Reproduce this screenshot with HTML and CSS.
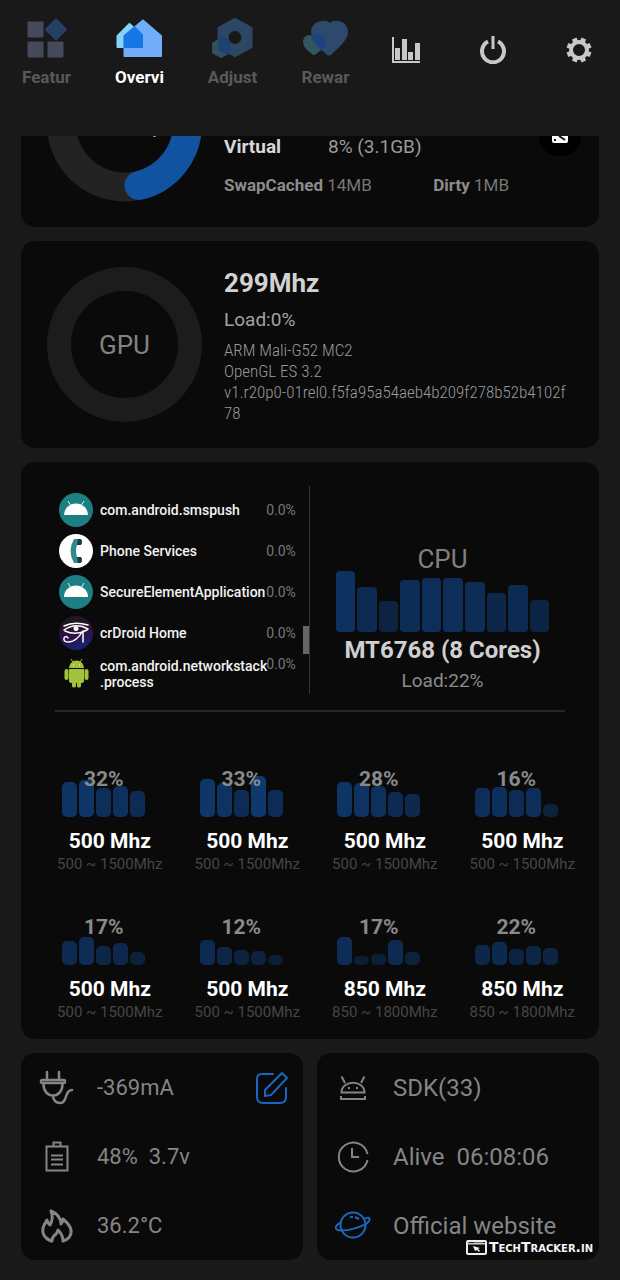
FILE: index.html
```html
<!DOCTYPE html>
<html lang="en">
<head>
<meta charset="utf-8">
<meta name="viewport" content="width=device-width, initial-scale=1">
<title>Overview</title>
<link rel="stylesheet" href="styles.css">
</head>
<body>
<header class="topbar">
  <nav class="tabs">
    <button class="tab" type="button">
      <svg class="tab-icon" viewBox="0 0 48 40"><g fill="#454a5a"><rect x="4.500" y="3.500" width="16" height="16" rx="1"/><rect x="4.500" y="23.500" width="16" height="16" rx="1"/><rect x="24.500" y="23.500" width="16" height="16" rx="1"/></g><path fill="#263f66" stroke="#263f66" stroke-width="2" stroke-linejoin="round" d="M33 1.500l10 10-10 10-10-10z"/></svg>
      <span>Featur</span>
    </button>
    <button class="tab tab-active" type="button">
      <svg class="tab-icon" viewBox="0 0 48 40"><g stroke-width="2" stroke-linejoin="round"><path fill="#86d3f9" stroke="#86d3f9" d="M1.500 18L13.500 6L26 18V29H1.500z"/><path fill="#71adfa" stroke="#71adfa" d="M8.500 18L27 2.500L45 18V38H8.500z"/><path fill="#1676e4" stroke="#1676e4" d="M8.500 18L18.500 9.500L26 17V29H8.500z"/></g></svg>
      <span>Overvi</span>
    </button>
    <button class="tab" type="button">
      <svg class="tab-icon" viewBox="0 0 48 40"><path fill="#2c4764" stroke="#2c4764" stroke-width="2" stroke-linejoin="round" d="M26 1L42.500 10V29L26 38L9.500 29V10z"/><path fill="#31505d" stroke="#31505d" stroke-linejoin="round" d="M12 20.500L20.500 25V35L12 39.500L3.500 35V25z"/><path fill="#1d4272" d="M9.500 21l4-2.500L21 24V35L18 37L9.500 32z"/><circle cx="26" cy="19.500" r="6.500" fill="#191919"/></svg>
      <span>Adjust</span>
    </button>
    <button class="tab" type="button">
      <svg class="tab-icon" viewBox="0 0 48 40"><path fill="#2d4a6c" d="M28 5C33 0 46 3 46 14C46 22 36 30 30 36C28 38 26 38 24 36C18 30 9 22 9 14C9 3 23 0 28 5z"/><path fill="#315660" d="M12 20C16 14 24 18 24 24C24 29 18 33 14 36Q12 38 10 36C6 33 1 29 1 24C1 18 8 14 12 20z"/><path fill="#1d447c" d="M10 18C15 14 24 17 24 24C24 28 21 31 19 32C15 28 10 23 10 18z"/></svg>
      <span>Rewar</span>
    </button>
  </nav>
  <div class="actions">
    <button class="action" type="button" aria-label="Charts">
      <svg viewBox="0 0 28 28" fill="#c8c8c8"><path d="M0 1h2v24h26v2H0zM3 12h5v12H3zM10 3h5v21h-5zM16 16h5v8h-5zM23 7h5v17h-5z"/></svg>
    </button>
    <button class="action" type="button" aria-label="Power">
      <svg viewBox="0 0 28 28" fill="none" stroke="#c8c8c8" stroke-width="4"><path d="M9 5.500A11 11 0 1 0 19 5.500"/><path stroke-width="3" d="M14 0v13"/></svg>
    </button>
    <button class="action" type="button" aria-label="Settings">
      <svg viewBox="0 0 28 28" fill="none" stroke="#c8c8c8"><circle cx="14" cy="14" r="8" stroke-width="4"/><g stroke-width="5"><path d="M14 1.500v4M14 22.500v4M1.500 14h4M22.500 14h4" transform="rotate(22.500 14 14)"/><path d="M14 1.500v4M14 22.500v4M1.500 14h4M22.500 14h4" transform="rotate(-22.500 14 14)"/></g></svg>
    </button>
  </div>
</header>

<main class="content">
  <section class="card memory">
    <svg class="memory-ring" viewBox="0 90 155 66" fill="none" stroke-width="29"><circle cx="77.500" cy="78" r="63" stroke="#232323"/><path d="M140.500 78A63 63 0 0 1 92 139.500" stroke="#1153a0" stroke-linecap="round"/><path d="M106 90.500h3" stroke="#8a8a8a" stroke-width="1"/></svg>
    <div class="memory-info">
      <div class="virtual"><b>Virtual</b><span>8% (3.1GB)</span></div>
      <div class="swap"><span><b>SwapCached</b> 14MB</span><span><b>Dirty</b> 1MB</span></div>
    </div>
    <button class="clean" type="button" aria-label="Clean memory">
      <svg viewBox="0 0 16 8"><path fill="#fff" d="M0 0h16v5q0 2-2 2H2Q0 7 0 5z"/><path fill="none" stroke="#111" stroke-width="2" d="M7 0l3 2 3 2M2 4h2"/></svg>
    </button>
  </section>

  <section class="card gpu">
    <div class="gpu-ring">GPU</div>
    <div class="gpu-info">
      <h2 class="gpu-clock">299Mhz</h2>
      <p class="gpu-load">Load:0%</p>
      <p class="gpu-details">ARM Mali-G52 MC2<br>OpenGL ES 3.2<br>v1.r20p0-01rel0.f5fa95a54aeb4b209f278b52b4102f78</p>
    </div>
  </section>

  <section class="card cpu">
    <div class="cpu-top">
      <ul class="processes">
        <li><svg class="app" viewBox="0 0 34 34"><circle cx="17" cy="17" r="17" fill="#1d7f83"/><path fill="#fff" d="M5 22a12 11.500 0 0 1 24 0z"/><path stroke="#d5eeee" d="M12 13L9 8M22 13l3-5"/></svg><span class="name">com.android.smspush</span><span class="usage">0.0%</span></li>
        <li><svg class="app" viewBox="0 0 34 34"><circle cx="17" cy="17" r="17" fill="#fff"/><path fill="#32888d" d="M15 5h7v6h-4q-2 6 0 12h4v6h-7q-7-12 0-24z"/><path fill="#123d47" d="M19 5h2q2 0 2 3t-2 3h-3zM18 23h3q2 0 2 3t-2 3h-2z"/></svg><span class="name">Phone Services</span><span class="usage">0.0%</span></li>
        <li><svg class="app" viewBox="0 0 34 34"><circle cx="17" cy="17" r="17" fill="#1d7f83"/><path fill="#fff" d="M5 22a12 11.500 0 0 1 24 0z"/><path stroke="#d5eeee" d="M12 13L9 8M22 13l3-5"/></svg><span class="name">SecureElementApplication</span><span class="usage">0.0%</span></li>
        <li><svg class="app" viewBox="0 0 34 34"><defs><linearGradient id="eye" x1="0" y1="0" x2="0.300" y2="1"><stop offset="0.200" stop-color="#1c1a1e"/><stop offset="0.600" stop-color="#321140"/><stop offset="1" stop-color="#1c2070"/></linearGradient></defs><circle cx="17" cy="17" r="17" fill="url(#eye)"/><g fill="none" stroke="#fff" stroke-width="1.500" stroke-linecap="round"><path d="M5 10q10-5 24-1M5 14q12-8 24-1M6 15q11 5 22-1M24 15v11M23 16q-5 9-13 10q-6 0-5-4q2-3 4 0"/></g><circle cx="17" cy="12.500" r="2.500" fill="#fff"/></svg><span class="name">crDroid Home</span><span class="usage">0.0%</span></li>
        <li><svg class="app" viewBox="0 0 34 34"><g fill="#a2c23b"><path d="M10 11a7.500 7.500 0 0 1 15 0z"/><path d="M10 12h15v12q0 2-2 2h-1v3q0 1.500-2 1.500t-2-1.500v-3h-1v3q0 1.500-2 1.500t-2-1.500v-3h-1q-2 0-2-2z"/><rect x="5.500" y="12" width="4" height="11" rx="2"/><rect x="25.500" y="12" width="4" height="11" rx="2"/></g><path stroke="#a2c23b" d="M14 5l-2-3M21 5l2-3"/><path stroke="#fff" d="M14 8h1M20 8h1"/></svg><span class="name">com.android.networkstack<wbr>.process</span><span class="usage usage-top">0.0%</span></li>
      </ul>
      <div class="scroll-track"><div class="scroll-thumb"></div></div>
      <div class="cpu-summary">
        <span class="cpu-label">CPU</span>
        <div class="bars bars-large"><i style="--h:61"></i><i style="--h:45"></i><i style="--h:31"></i><i style="--h:52"></i><i style="--h:54"></i><i style="--h:54"></i><i style="--h:50"></i><i style="--h:39"></i><i style="--h:47"></i><i style="--h:32"></i></div>
        <h2 class="cpu-name">MT6768 (8 Cores)</h2>
        <p class="cpu-load">Load:22%</p>
      </div>
    </div>
    <div class="cores">
      <div class="core"><div class="meter"><div class="bars"><i style="--h:35"></i><i style="--h:37"></i><i style="--h:29"></i><i style="--h:31"></i><i style="--h:26"></i></div><span class="percent">32%</span></div><b class="clock">500 Mhz</b><span class="range">500 ~ 1500Mhz</span></div>
      <div class="core"><div class="meter"><div class="bars"><i style="--h:38"></i><i style="--h:34"></i><i style="--h:27"></i><i style="--h:41"></i><i style="--h:27"></i></div><span class="percent">33%</span></div><b class="clock">500 Mhz</b><span class="range">500 ~ 1500Mhz</span></div>
      <div class="core"><div class="meter"><div class="bars"><i style="--h:35"></i><i style="--h:34"></i><i style="--h:31"></i><i style="--h:25"></i><i style="--h:23"></i></div><span class="percent">28%</span></div><b class="clock">500 Mhz</b><span class="range">500 ~ 1500Mhz</span></div>
      <div class="core"><div class="meter"><div class="bars"><i style="--h:29"></i><i style="--h:30"></i><i style="--h:27"></i><i style="--h:29"></i><i style="--h:13"></i></div><span class="percent">16%</span></div><b class="clock">500 Mhz</b><span class="range">500 ~ 1500Mhz</span></div>
      <div class="core"><div class="meter"><div class="bars"><i style="--h:24"></i><i style="--h:28"></i><i style="--h:19"></i><i style="--h:22"></i><i style="--h:13"></i></div><span class="percent">17%</span></div><b class="clock">500 Mhz</b><span class="range">500 ~ 1500Mhz</span></div>
      <div class="core"><div class="meter"><div class="bars"><i style="--h:25"></i><i style="--h:18"></i><i style="--h:15"></i><i style="--h:14"></i><i style="--h:10"></i></div><span class="percent">12%</span></div><b class="clock">500 Mhz</b><span class="range">500 ~ 1500Mhz</span></div>
      <div class="core"><div class="meter"><div class="bars"><i style="--h:28"></i><i style="--h:9"></i><i style="--h:11"></i><i style="--h:25"></i><i style="--h:13"></i></div><span class="percent">17%</span></div><b class="clock">850 Mhz</b><span class="range">850 ~ 1800Mhz</span></div>
      <div class="core"><div class="meter"><div class="bars"><i style="--h:20"></i><i style="--h:23"></i><i style="--h:16"></i><i style="--h:19"></i><i style="--h:17"></i></div><span class="percent">22%</span></div><b class="clock">850 Mhz</b><span class="range">850 ~ 1800Mhz</span></div>
    </div>
  </section>

  <div class="pair">
    <section class="card facts facts-power">
      <div class="fact">
        <svg class="fact-icon" viewBox="0 0 36 36"><path stroke-width="2.500" stroke-linejoin="round" stroke-linecap="round" d="M8 2v8M20 2v8M3 10h22q1 0 1 1.500T25 13H3q-1 0-1-1.500T3 10zM4.500 14c0 7 4 11.500 9.500 11.500S23.500 21 23.500 14M14 26c0 4 3 7 7 7c8 0 4-13 12-13"/></svg>
        <span class="fact-text">-369mA</span>
        <button class="edit" type="button" aria-label="Edit"><svg viewBox="0 0 34 34" fill="none" stroke="#1b66be" stroke-width="2" stroke-linejoin="round" stroke-linecap="round"><path d="M18 3H7q-5 0-5 5v18q0 6 6 6h17q6 0 6-6V17M27 2l5 5L16 24l-6 1V19z"/></svg></button>
      </div>
      <div class="fact">
        <svg class="fact-icon" viewBox="0 0 36 36"><path d="M7.500 7.500h21v24h-21zM14.500 7V3.500h7V7M12 16.500h12M12 20.500h12M12 25.500h12"/></svg>
        <span class="fact-text">48%&nbsp; 3.7v</span>
      </div>
      <div class="fact">
        <svg class="fact-icon" viewBox="0 0 36 36"><path stroke-width="3" stroke-linejoin="round" d="M12 33C5 30 3 25 4 20C5 16 7 14 8 12Q9 16 11 17C14 12 14 8 12 3C19 6 22 10 22 16Q24 14 24 11C30 16 33 20 32 25Q31 31 24 33Q24 27 19 22Q18 25 17 26Q13 29 13 33z"/></svg>
        <span class="fact-text">36.2°C</span>
      </div>
    </section>
    <section class="card facts">
      <div class="fact">
        <svg class="fact-icon" viewBox="0 0 36 36"><path d="M6.500 22.500c0-13 23-13 23 0zM10 13L6.500 6.500M26 13l3.500-6.500M6 26v3h24v-3M13 18h2M21 18h2"/></svg>
        <span class="fact-text">SDK(33)</span>
      </div>
      <div class="fact">
        <svg class="fact-icon" viewBox="0 0 36 36"><path d="M32.500 15A14.500 14.500 0 1 0 32.500 21M17 9v9h7"/></svg>
        <span class="fact-text">Alive&nbsp; 06:08:06</span>
      </div>
      <div class="fact">
        <svg class="fact-icon fact-icon-blue" viewBox="0 0 36 36"><circle cx="18" cy="17" r="12.500"/><path d="M7 14C0 17-1 21 3 22C12 24 31 18 34 13C36 9 32 9 29 11M15 9h3M20 9l4 2"/></svg>
        <a class="fact-text" href="#">Official website</a>
      </div>
      <div class="watermark"><svg viewBox="0 0 21 15"><rect x="1" y="1" width="19" height="13" rx="1" fill="none" stroke="#eee" stroke-width="2"/><path stroke="#ccc" stroke-width="2" d="M1 3.500h18"/><path stroke="#222" d="M3 2.500h5M17 2.500h2"/><path fill="#eee" d="M7 6l7 2-2 1 2 2-1 1-2-2-2 1z"/></svg><span>TechTracker.in</span></div>
    </section>
  </div>
</main>
</body>
</html>
```

FILE: styles.css
```css
* { box-sizing: border-box; }

body {
  margin: 0;
  background: #191919;
  color: #9a9a9a;
  font-family: Roboto, "Liberation Sans", sans-serif;
  font-size: 17px;
}

h2, p, ul { margin: 0; padding: 0; }
svg { display: block; }

button {
  padding: 0;
  border: 0;
  background: none;
  color: inherit;
  font: inherit;
}

.topbar {
  display: grid;
  grid-template-columns: 3fr 2fr;
  height: 136px;
}

.tabs { display: flex; padding-top: 18px; }

.tab {
  display: flex;
  flex: 1;
  flex-direction: column;
  align-items: center;
  align-self: flex-start;
  gap: 8px;
  color: #595959;
  font-weight: 700;
  line-height: 22px;
}

.tab-active { color: #fff; }
.tab-icon { width: 48px; height: 40px; }

.actions {
  display: flex;
  justify-content: space-between;
  align-items: flex-start;
  padding: 36px 27px 0 20px;
}

.action svg { width: 28px; height: 28px; }

.content {
  display: flex;
  flex-direction: column;
  gap: 14px;
  padding: 0 21px 20px;
}

.card { border-radius: 14px; background: #0a0a0a; }

.memory {
  display: flex;
  gap: 22px;
  padding: 0 18px 25px 26px;
  border-radius: 0 0 14px 14px;
}

.memory-ring { width: 155px; height: 66px; }
.memory-info { flex: 1; }
.memory-info b { font-weight: 700; }

.virtual {
  display: flex;
  font-size: 19px;
  line-height: 22px;
}

.virtual b { width: 104px; color: #d8d8d8; }

.swap {
  display: flex;
  justify-content: space-between;
  margin-top: 17px;
  padding-right: 30px;
  color: #777;
  line-height: 20px;
}

.swap b { color: #8c8c8c; }

.clean {
  display: flex;
  justify-content: center;
  align-self: flex-start;
  width: 42px;
  height: 20px;
  margin-left: -22px;
  border-radius: 0 0 21px 21px;
  background: #000;
}

.clean svg { width: 16px; height: 8px; }

.gpu {
  display: flex;
  gap: 22px;
  padding: 26px 30px 24px 26px;
}

.gpu-ring {
  display: grid;
  place-items: center;
  flex: none;
  width: 155px;
  height: 155px;
  border: 24px solid #1c1c1c;
  border-radius: 50%;
  color: #828282;
  font-size: 26px;
}

.gpu-clock {
  color: #d2d2d2;
  font-size: 26px;
  line-height: 32px;
}

.gpu-load {
  margin-top: 10px;
  color: #a3a3a3;
  font-size: 19px;
  line-height: 22px;
}

.gpu-details {
  margin-top: 9px;
  font-family: "Roboto Condensed", Roboto, sans-serif;
  font-weight: 300;
  line-height: 21px;
  word-break: break-all;
}

.cpu { padding: 24px 20px 17px; }

.cpu-top {
  display: flex;
  margin: 0 14px;
  padding-bottom: 16px;
  border-bottom: 2px solid #262626;
}

.processes {
  flex: 1;
  padding-top: 3px;
  list-style: none;
}

.processes li {
  display: grid;
  grid-template-columns: 34px 1fr 29px;
  align-items: center;
  column-gap: 7px;
  min-height: 41px;
  padding: 3px 0 3px 4px;
  font-size: 14px;
  line-height: 16px;
}

.app { width: 34px; height: 34px; }

.name {
  margin-right: -8px;
  color: #f2f2f2;
  font-weight: 500;
}

.usage { color: #777; }
.usage-top { align-self: start; }

.scroll-track {
  width: 16px;
  padding: 140px 0 0 8px;
  border-right: 1px solid #333;
}

.scroll-thumb { height: 28px; background: #666; }

.cpu-summary {
  display: flex;
  flex: 0 0 50%;
  flex-direction: column;
  align-items: center;
  padding: 62px 0 0 10px;
}

.cpu-label {
  color: #808080;
  font-size: 26px;
  line-height: 23px;
}

.bars {
  display: flex;
  align-items: flex-end;
  gap: 2px;
  width: 83px;
}

.bars i {
  flex: 1;
  height: calc(var(--h) * 1px);
  border-radius: 5px;
  background: #1150a0;
  opacity: calc(0.18 + var(--h) * 0.012);
}

.bars-large { width: 214px; }
.bars-large i { border-radius: 4px; opacity: calc(0.17 + var(--h) * 0.0066); }

.cpu-name {
  margin-top: 4px;
  color: #d0d0d0;
  font-size: 24px;
  line-height: 28px;
}

.cpu-load {
  margin-top: 6px;
  color: #8a8a8a;
  font-size: 19px;
  line-height: 22px;
}

.cores {
  display: grid;
  grid-template-columns: repeat(4, 1fr);
  row-gap: 42px;
  margin-right: -12px;
  padding-top: 56px;
}

.core {
  display: flex;
  flex-direction: column;
  align-items: center;
}

.meter {
  display: grid;
  justify-items: center;
  height: 49px;
  margin-right: 12px;
}

.meter > * { grid-area: 1 / 1; }
.meter .bars { align-self: end; }

.percent {
  z-index: 1;
  color: #8a8a8a;
  font-size: 21px;
  font-weight: 700;
  line-height: 22px;
}

.clock {
  margin-top: 12px;
  color: #fff;
  font-size: 21px;
  line-height: 24px;
}

.range {
  margin-top: 1px;
  color: #464646;
  font-size: 15px;
  line-height: 20px;
}

.pair { display: flex; gap: 14px; }
.pair .card { position: relative; flex: 1; }

.fact {
  display: flex;
  align-items: center;
  height: 69px;
  padding: 0 14px 0 18px;
}

.fact-icon {
  width: 36px;
  height: 36px;
  fill: none;
  stroke: #858585;
  stroke-width: 2;
}

.fact-icon-blue { stroke: #1b66be; }

.fact-text {
  flex: 1;
  margin-left: 22px;
  color: #858585;
  font-size: 24px;
  text-decoration: none;
  white-space: nowrap;
}

.facts-power .fact-text { font-size: 22px; }

.edit svg { width: 34px; height: 34px; }

.watermark {
  position: absolute;
  right: 6px;
  bottom: 5px;
  display: flex;
  align-items: center;
  gap: 2px;
  color: #f4f4f4;
  font-family: "DejaVu Sans", sans-serif;
  font-size: 14px;
  font-variant-caps: small-caps;
  font-weight: 700;
  line-height: 15px;
}

.watermark svg { width: 21px; height: 15px; }
```
